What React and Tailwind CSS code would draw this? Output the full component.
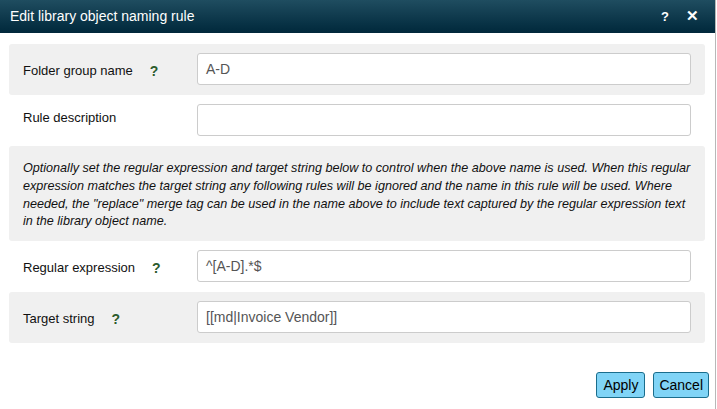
import React from "react";

function Help() {
  return (
    <span className="ml-[17px] text-[14px] font-bold text-[#2c5b2c] leading-none">?</span>
  );
}

function Field({ label, help, value, shaded, raised }) {
  return (
    <div
      className={`flex items-center px-[14px] pt-[9px] pb-[10px] rounded-[3px] ${
        shaded ? "bg-[#f0f0f0]" : ""
      }`}
    >
      <div
        className={`w-[174px] flex items-center text-[13px] text-[#111] ${
          raised ? "pb-[4px]" : "pt-[3px]"
        }`}
      >
        <span>{label}</span>
        {help && <Help />}
      </div>
      <div className="flex-1 h-[32px] bg-white border border-[#cccccc] rounded-[3px] flex items-center px-[8px] text-[14px] text-[#555]">
        {value}
      </div>
    </div>
  );
}

export default function App() {
  return (
    <div
      className="w-[716px] h-[409px] bg-white border-r border-[#b8b8b8] flex flex-col"
      style={{ fontFamily: '"Liberation Sans", Arial, sans-serif' }}
    >
      <div className="h-[33px] bg-gradient-to-b from-[#1f4d60] to-[#01283b] flex items-center justify-between pl-[10px] pr-[16px]">
        <span className="text-white text-[14px]">Edit library object naming rule</span>
        <div className="flex items-center gap-[17px] text-white font-bold">
          <span className="text-[13px]">?</span>
          <span className="text-[15px]">✕</span>
        </div>
      </div>
      <div className="px-[9px] pr-[10px] pt-[11px] flex flex-col">
        <Field label="Folder group name" help value="A-D" shaded />
        <Field label="Rule description" value="" raised />
        <div className="bg-[#f0f0f0] rounded-[3px] pl-[14px] pr-[10px] pt-[14px] pb-[10px] text-[12.6px] leading-[17.8px] italic text-[#111]">
          Optionally set the regular expression and target string below to control when the above name is used. When this regular expression matches the target string any following rules will be ignored and the name in this rule will be used. Where needed, the "replace" merge tag can be used in the name above to include text captured by the regular expression text in the library object name.
        </div>
        <Field label="Regular expression" help value="^[A-D].*$" />
        <Field label="Target string" help value="[[md|Invoice Vendor]]" shaded />
      </div>
      <div className="flex justify-end gap-[8px] pr-[6px] mt-[29px]">
        <button className="h-[26px] px-[6px] bg-[#80d4f6] border border-[#1a6d8c] rounded-[3px] text-[14px] text-black">
          Apply
        </button>
        <button className="h-[26px] px-[5px] bg-[#80d4f6] border border-[#1a6d8c] rounded-[3px] text-[14px] text-black">
          Cancel
        </button>
      </div>
    </div>
  );
}
